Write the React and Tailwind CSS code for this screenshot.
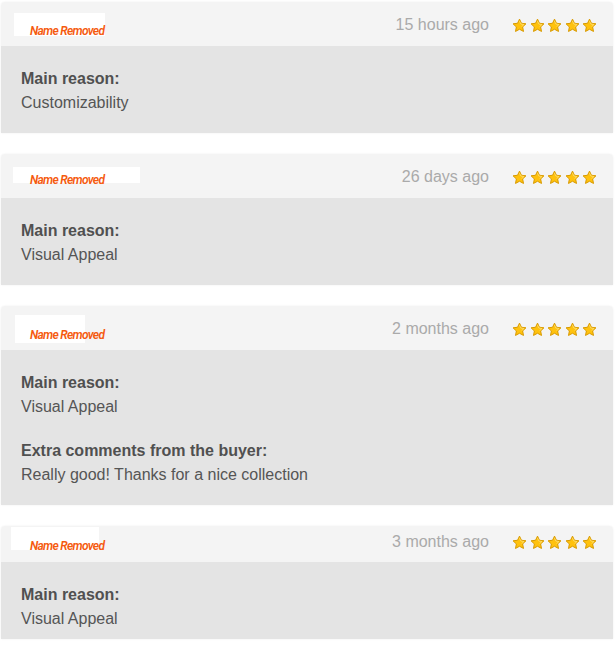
import React from 'react';

const reviews = [
    {
        id: 1,
        when: '15 hours ago',
        header: 'h-[44px]',
        box: 'left-[13px] top-[11px] w-[91px] h-[23px]',
        name: 'top-[22px]',
        headerPad: '',
        bodyPad: 'pb-[18px]',
        sections: [{ label: 'Main reason:', text: 'Customizability' }]
    },
    {
        id: 2,
        when: '26 days ago',
        header: 'h-[44px]',
        box: 'left-[12px] top-[13px] w-[127px] h-[16px]',
        name: 'top-[19px]',
        headerPad: '',
        bodyPad: 'pb-[18px]',
        sections: [{ label: 'Main reason:', text: 'Visual Appeal' }]
    },
    {
        id: 3,
        when: '2 months ago',
        header: 'h-[44px]',
        box: 'left-[14px] top-[9px] w-[70px] h-[28px]',
        name: 'top-[22px]',
        headerPad: '',
        bodyPad: 'pb-[18px]',
        sections: [
            { label: 'Main reason:', text: 'Visual Appeal' },
            { label: 'Extra comments from the buyer:', text: 'Really good! Thanks for a nice collection' }
        ]
    },
    {
        id: 4,
        when: '3 months ago',
        header: 'h-[36px]',
        box: 'left-[10px] top-[1px] w-[88px] h-[23px]',
        name: 'top-[13px]',
        headerPad: 'pb-[6px]',
        bodyPad: 'pb-[8px]',
        sections: [{ label: 'Main reason:', text: 'Visual Appeal' }]
    }
];

const Star = () => (
    <svg width="15" height="15" viewBox="0 0 24 24">
        <path
            d="M12 1.8l3.1 6.6 7.2.9-5.3 5 1.4 7.2L12 18l-6.4 3.5 1.4-7.2-5.3-5 7.2-.9z"
            fill="#ffc20e"
            stroke="#d99a00"
            strokeWidth="1.6"
            strokeLinejoin="round"
        />
        <path d="M12 5l2.2 4.7 5 .6-3.4 3" fill="none" stroke="#ffe27a" strokeWidth="1.2" strokeLinecap="round" />
    </svg>
);

const ReviewCard = ({ review }) => (
    <div className="rounded-t-[4px] shadow-[0_0_2px_rgba(0,0,0,0.08)]">
        {/* Header */}
        <div className={`relative flex items-center justify-end rounded-t-[4px] bg-[#f4f4f4] pr-[16px] pt-[2px] ${review.header} ${review.headerPad}`}>
            <div className={`absolute bg-white ${review.box}`} />
            <span
                className={`absolute left-[29px] text-[12px] leading-[14px] italic font-semibold tracking-[-0.7px] text-[#f55a0e] ${review.name}`}
                style={{ fontFamily: 'Roboto, "Liberation Sans", sans-serif' }}
            >
                Name Removed
            </span>
            <span className="text-[16px] text-[#aaaaaa]">{review.when}</span>
            <div className="ml-[23px] flex gap-[2.5px]">
                {[0, 1, 2, 3, 4].map(i => <Star key={i} />)}
            </div>
        </div>

        {/* Body */}
        <div className={`bg-[#e4e4e4] px-[20px] pt-[21px] text-[16px] leading-[24px] text-[#555555] ${review.bodyPad}`}>
            <div className="flex flex-col gap-[20px]">
                {review.sections.map(s => (
                    <div key={s.label}>
                        <div className="font-bold text-[#505050]">{s.label}</div>
                        <div>{s.text}</div>
                    </div>
                ))}
            </div>
        </div>
    </div>
);

export default function App() {
    return (
        <div
            className="min-h-[648px] bg-white px-[1px] pt-[2px]"
            style={{ fontFamily: '"Liberation Sans", Arial, sans-serif' }}
        >
            <div className="flex w-[612px] flex-col gap-[21px]">
                {reviews.map(r => <ReviewCard key={r.id} review={r} />)}
            </div>
        </div>
    );
}
